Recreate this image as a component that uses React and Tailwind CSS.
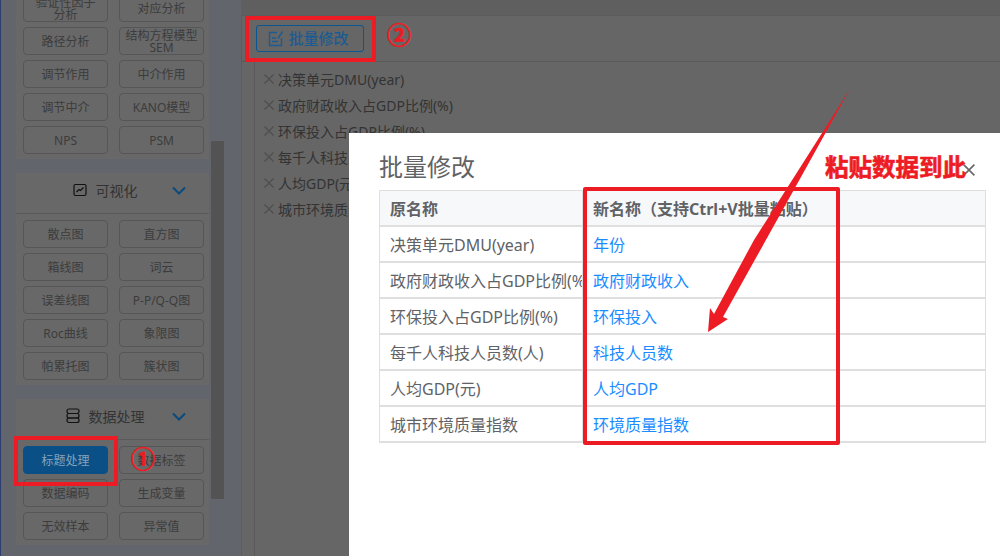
import React from 'react';

const sections = [
  { rows: [['验证性因子\n分析', '对应分析'], ['路径分析', '结构方程模型\nSEM'], ['调节作用', '中介作用'], ['调节中介', 'KANO模型'], ['NPS', 'PSM']] },
  { title: '可视化', icon: 'chart', rows: [['散点图', '直方图'], ['箱线图', '词云'], ['误差线图', 'P-P/Q-Q图'], ['Roc曲线', '象限图'], ['帕累托图', '簇状图']] },
  { title: '数据处理', icon: 'db', rows: [['标题处理', '数据标签'], ['数据编码', '生成变量'], ['无效样本', '异常值']] },
];

const tags = ['决策单元DMU(year)', '政府财政收入占GDP比例(%)', '环保投入占GDP比例(%)', '每千人科技人员数(人)', '人均GDP(元)', '城市环境质量指数'];
const rows = [
  ['决策单元DMU(year)', '年份'],
  ['政府财政收入占GDP比例(%)', '政府财政收入'],
  ['环保投入占GDP比例(%)', '环保投入'],
  ['每千人科技人员数(人)', '科技人员数'],
  ['人均GDP(元)', '人均GDP'],
  ['城市环境质量指数', '环境质量指数'],
];

const ChartIcon = () => (
  <svg width="14" height="14" viewBox="0 0 14 14" fill="none" stroke="#111" strokeWidth="1.2">
    <rect x="1" y="1.5" width="12" height="11" rx="1.5" />
    <path d="M3.5 9l2.5-2.5 1.5 1 3-3" />
  </svg>
);

const DbIcon = () => (
  <svg width="14" height="16" viewBox="0 0 14 16" fill="none" stroke="#111" strokeWidth="1.2">
    <rect x="1" y="1" width="12" height="4.5" rx="2" />
    <rect x="1" y="5.5" width="12" height="4.5" rx="2" />
    <rect x="1" y="10" width="12" height="4.5" rx="2" />
  </svg>
);

const Chevron = () => (
  <svg width="14" height="9" viewBox="0 0 14 9" fill="none" stroke="#0b4a7c" strokeWidth="2">
    <path d="M1 1.5l6 6 6-6" />
  </svg>
);

const Cross = ({ size, color, width }) => (
  <svg width={size} height={size} viewBox="0 0 10 10" fill="none" stroke={color} strokeWidth={width}>
    <path d="M0.5 0.5l9 9M9.5 0.5l-9 9" />
  </svg>
);

const SideButton = ({ label }) => {
  const active = label === '标题处理';
  return (
    <div
      className={`w-[85px] h-[28px] pt-[2px] rounded-[4px] border flex items-center justify-center text-center whitespace-pre-line text-[12px] leading-[12px] ${
        active ? 'bg-[#0a4f86] border-[#0a4f86] text-[#86a3ba]' : 'border-[#565656] text-[#3c3c3c]'
      }`}
    >
      {label}
    </div>
  );
};

const Section = ({ section }) => (
  <div className="bg-[#686868]">
    {section.title && (
      <div className="h-[41px] pb-[6px] flex items-center justify-center border-b border-[#5a5a5a] text-[#333] text-[14px] relative">
        <span className="flex items-center gap-[9px] mr-[15px]">
          {section.icon === 'chart' ? <ChartIcon /> : <DbIcon />}
          {section.title}
        </span>
        <span className="absolute right-[23px] top-[13px]"><Chevron /></span>
      </div>
    )}
    <div className={`grid grid-cols-[85px_85px] gap-x-[11px] gap-y-[5px] pl-[7px] pb-[5px] ${section.title ? 'pt-[6px]' : ''}`}>
      {section.rows.flat().map((label) => <SideButton key={label} label={label} />)}
    </div>
  </div>
);

const Arrow = () => (
  <svg className="absolute left-0 top-0 pointer-events-none" width="1000" height="556" viewBox="0 0 1000 556">
    <polygon points="849,89 722,317 727,319 707,332 709,308 713,314 753,240" fill="#ed1c24" />
  </svg>
);

export default function App() {
  return (
    <div className="relative w-[1000px] h-[556px] overflow-hidden bg-[#63656c] border-l border-[#2c3f70] flex" style={{ fontFamily: '"Noto Sans", "Noto Sans CJK SC", sans-serif' }}>
      {/* sidebar */}
      <div className="w-[210px] shrink-0 pl-[15px] -mt-[6px]">
        <div className="w-[193px] flex flex-col gap-[14px]">
          {sections.map((s, i) => <Section key={i} section={s} />)}
        </div>
      </div>

      <div className="w-[13px] h-[358px] mt-[141px] bg-[#535353] shrink-0" />
      <div className="w-[17px] shrink-0" />

      {/* main area */}
      <div className="flex-1 pt-[15px] bg-[#5f5f5f]">
        <div className="h-full bg-[#666666] border-t border-l border-[#5c5c5c]">
          <div className="h-[46px] border-b border-[#5a5a5a] pl-[14px] pt-[9px]">
            <div className="w-[108px] h-[27px] pr-[4px] rounded-[3px] border border-[#0b5590] flex items-center justify-center gap-[3px] text-[#1a5c92] text-[15px] font-medium">
              <svg width="18" height="18" viewBox="0 0 18 18" fill="none" stroke="#1a5c92" strokeWidth="1.4">
                <path d="M10 2.5H2.5v13h12V8" />
                <path d="M15.5 1.5L11 8.5" />
                <path d="M5 8h4M5 11.5h6" />
              </svg>
              批量修改
            </div>
          </div>
          <div className="ml-[12px] h-full border-l border-[#5a5a5a] pt-[4px] pl-[9px]">
            {tags.map((t) => (
              <div key={t} className="h-[26px] flex items-center gap-[4px] text-[14px] text-[#333] whitespace-nowrap">
                <Cross size={10} color="#505050" width={1.5} />
                {t}
              </div>
            ))}
          </div>
        </div>
      </div>

      {/* modal */}
      <div className="absolute left-[348px] top-[133px] w-[651px] h-[423px] bg-white pl-[30px]">
        <div className="pt-[16px] h-[57px] text-[24px] leading-[36px] text-[#606266]">批量修改</div>
        <table className="w-[607px] table-fixed border-collapse text-[16px] text-[#606266]">
          <thead>
            <tr className="h-[35px] bg-[#f7f8fa] font-bold">
              <th className="w-[203px] border border-[#dfdfdf] border-b-2 px-[10px] pt-[3px] pb-0 text-left">原名称</th>
              <th className="border border-[#dfdfdf] border-b-2 px-[10px] pt-[3px] pb-0 text-left font-bold">新名称（支持Ctrl+V批量粘贴）</th>
            </tr>
          </thead>
          <tbody>
            {rows.map(([oldName, newName]) => (
              <tr key={oldName} className="h-[36px]">
                <td className="border border-[#dfdfdf] border-b-2 px-[10px] pt-[2px] pb-0 whitespace-nowrap overflow-hidden">{oldName}</td>
                <td className="border border-[#dfdfdf] border-b-2 px-[10px] pt-[2px] pb-0 text-[#1a8cff]">{newName}</td>
              </tr>
            ))}
          </tbody>
        </table>
      </div>

      {/* annotations */}
      <div className="absolute left-[962px] top-[164px]"><Cross size={12} color="#666" width={1.3} /></div>
      <div className="absolute left-[824px] top-[151px] text-[23.5px] leading-[32px] font-bold text-[#ed1c24] whitespace-nowrap [-webkit-text-stroke:0.6px_#ed1c24]">粘贴数据到此</div>
      <div className="absolute left-[13px] top-[436px] w-[104px] h-[50px] border-[4px] border-[#ed1c24]" />
      <div className="absolute left-[244px] top-[16px] w-[131px] h-[46px] border-[4px] border-[#ed1c24]" />
      <div className="absolute left-[582px] top-[187px] w-[257px] h-[258px] border-[4px] border-[#ed1c24] rounded-[2px]" />
      <div className="absolute left-[386px] top-[19px] text-[24px] leading-[32px] font-bold text-[#ed1c24] [-webkit-text-stroke:0.7px_#ed1c24]">②</div>
      <div className="absolute left-[130px] top-[443px] text-[24px] leading-[32px] font-bold text-[#ed1c24] [-webkit-text-stroke:0.7px_#ed1c24]">①</div>
      <Arrow />
    </div>
  );
}
